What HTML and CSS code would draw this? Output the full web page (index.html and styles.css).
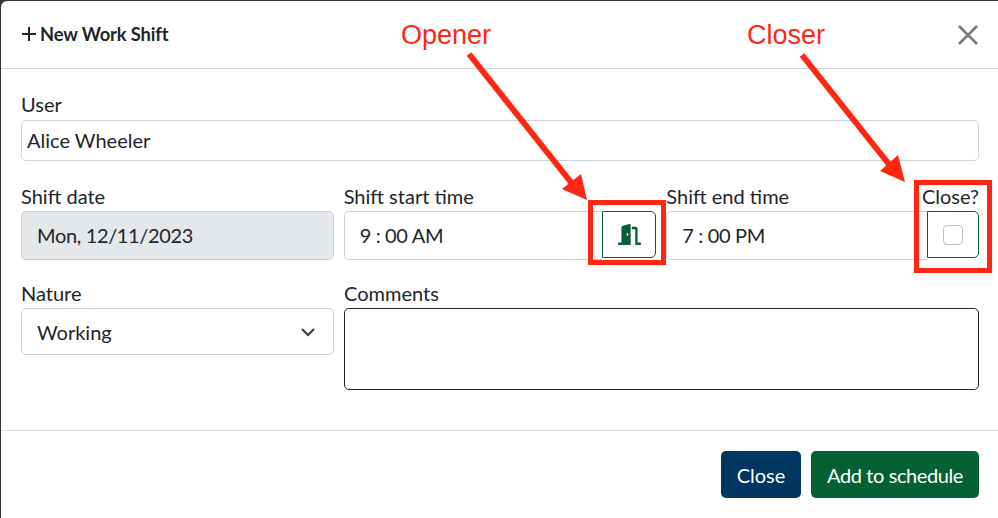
FILE: index.html
```html
<!DOCTYPE html>
<html lang="en">
<head>
  <meta charset="UTF-8" />
  <title>New Work Shift</title>
  <link rel="stylesheet" href="styles.css">
</head>
<body>

  <div class="modal">
    <header class="modal-header">
      <h5 class="modal-title">
        <svg class="plus" viewBox="0 0 14 14" width="14" height="14" aria-hidden="true">
          <path d="M7 0V14M0 7H14" />
        </svg>
        New Work Shift
      </h5>
      <svg class="close-x" viewBox="0 0 20 20" width="20" height="20" aria-hidden="true">
        <path d="M1 1 19 19M19 1 1 19" />
      </svg>
    </header>

    <div class="modal-body">
      <div class="row">
        <div class="col">
          <label>User</label>
          <div class="field field-user">Alice Wheeler</div>
        </div>
      </div>

      <div class="row row-times">
        <div class="col">
          <label>Shift date</label>
          <div class="field field-lg field-disabled">Mon, 12/11/2023</div>
        </div>
        <div class="col">
          <label>Shift start time</label>
          <div class="input-group">
            <div class="field field-lg">9 : 00 AM</div>
            <div class="addon">
              <svg viewBox="0 0 640 512" width="23" height="21" preserveAspectRatio="none" fill="#05603a" aria-hidden="true">
                <path d="M624 448h-80V113.45C544 86.19 522.47 64 496 64H384v64h96v384h144c8.84 0 16-7.16 16-16v-32c0-8.84-7.16-16-16-16zM312.24 1.01l-192 49.74C105.99 54.44 96 67.7 96 82.92V448H16c-8.84 0-16 7.16-16 16v32c0 8.84 7.16 16 16 16h336V33.18c0-21.58-19.56-37.41-39.76-32.17zM264 288c-13.25 0-24-14.33-24-32s10.75-32 24-32 24 14.33 24 32-10.75 32-24 32z" />
              </svg>
            </div>
          </div>
        </div>
        <div class="col">
          <div class="label-row">
            <label>Shift end time</label>
            <label>Close?</label>
          </div>
          <div class="input-group">
            <div class="field field-lg">7 : 00 PM</div>
            <div class="addon addon-check"><span class="check"></span></div>
          </div>
        </div>
      </div>

      <div class="row row-bottom">
        <div class="col">
          <label>Nature</label>
          <div class="field field-select">
            Working
            <svg viewBox="0 0 16 16" width="16" height="16" aria-hidden="true">
              <path d="m2 5 6 6 6-6" />
            </svg>
          </div>
        </div>
        <div class="col col-wide">
          <label>Comments</label>
          <div class="comments"></div>
        </div>
      </div>
    </div>

    <footer class="modal-footer">
      <button class="btn btn-navy">Close</button>
      <button class="btn btn-green">Add to schedule</button>
    </footer>
  </div>

  <!-- red annotations drawn on top of the screenshot -->
  <div class="note note-opener">Opener</div>
  <div class="note note-closer">Closer</div>
  <svg class="marks" width="998" height="518" viewBox="0 0 998 518" aria-hidden="true">
    <path class="mark-line" d="M469 54 574 186" />
    <path class="mark-head" d="M587 200 562 189 581 174Z" />
    <path class="mark-line" d="M802 55 892 168" />
    <path class="mark-head" d="M905 182 880 171 898 155Z" />
    <rect class="mark-box" x="590.5" y="202.5" width="73" height="60" />
    <rect class="mark-box" x="916.5" y="182.5" width="73" height="88" />
  </svg>

</body>
</html>
```

FILE: styles.css
```css
* {
  box-sizing: border-box;
}

body {
  margin: 0;
  width: 998px;
  height: 518px;
  overflow: hidden;
  position: relative;
  background: #333;
  font-family: Lato, 'Open Sans', sans-serif;
  color: #212529;
}

.modal {
  height: 517px;
  margin: 1px 0 0 1px;
  background: white;
  border-top-left-radius: 6px;
  display: flex;
  flex-direction: column;
}

.modal-header {
  height: 68px;
  flex: none;
  display: flex;
  align-items: center;
  justify-content: space-between;
  padding: 0 20px 0 21px;
  border-bottom: 1px solid #d3d8e0;
}

.modal-title {
  margin: 0 0 1px;
  display: flex;
  align-items: center;
  gap: 4px;
  font-size: 18.3px;
  font-weight: 700;
  letter-spacing: -0.1px;
}

.plus {
  stroke: #212529;
  stroke-width: 2;
}

.close-x {
  stroke: #7a7a7a;
  stroke-width: 2.6;
  fill: none;
}

.modal-body {
  flex: 1;
  padding: 24px 19px 0 20px;
}

.row {
  display: flex;
  gap: 10px;
}

.row-times {
  margin-top: 24px;
}

.row-bottom {
  margin-top: 22px;
}

.col {
  flex: 1;
  min-width: 0;
}

.row-bottom .col {
  flex: none;
  width: 313px;
}

.row-bottom .col-wide {
  width: 635px;
}

label {
  display: block;
  height: 24px;
  line-height: 22px;
  font-size: 20px;
  white-space: nowrap;
}

.label-row {
  display: flex;
  justify-content: space-between;
}

.field {
  background: white;
  border: 1px solid #c9cfdb;
  border-radius: 5px;
  display: flex;
  align-items: center;
}

.field-user {
  height: 41px;
  padding: 0 5px 2px;
  margin-top: 3px;
  font-size: 20px;
}

.field-lg {
  height: 49px;
  padding: 0 15px 2px;
  font-size: 20px;
  letter-spacing: -0.35px;
  flex: 1;
  margin-top: 2px;
}

.field-disabled {
  background: #e5e8eb;
}

.field-select {
  height: 47px;
  padding: 0 17px 0 15px;
  margin-top: 2px;
  font-size: 20px;
  justify-content: space-between;
}

.field-select svg {
  fill: none;
  stroke: #343a40;
  stroke-width: 2;
}

.input-group {
  display: flex;
}

.input-group .field {
  border-radius: 5px 0 0 5px;
  border-right: none;
}

.addon {
  flex: none;
  width: 54px;
  height: 47px;
  margin-top: 2px;
  border: 1px solid #05603a;
  border-radius: 0 5px 5px 0;
  display: flex;
  align-items: center;
  justify-content: center;
}

.addon-check {
  width: 52px;
}

.check {
  width: 20px;
  height: 20px;
  border: 1px solid #bfbfbf;
  border-radius: 4px;
}

.comments {
  height: 82px;
  margin-top: 2px;
  border: 1px solid #212529;
  border-radius: 5px;
}

.modal-footer {
  flex: none;
  height: 88px;
  display: flex;
  justify-content: flex-end;
  align-items: flex-start;
  gap: 10px;
  padding: 20px 19px 0 0;
  border-top: 1px solid #dedede;
}

.btn {
  height: 47px;
  border: none;
  border-radius: 5px;
  padding: 0 16px;
  font-family: inherit;
  font-size: 20px;
  color: white;
}

.btn-navy {
  background: #00365f;
  width: 80px;
  padding: 0;
}

.btn-green {
  background: #056034;
  letter-spacing: -0.4px;
}

.note {
  position: absolute;
  font-family: 'Liberation Sans', sans-serif;
  font-size: 27px;
  line-height: 32px;
  color: #ff2712;
}

.note-opener {
  left: 401px;
  top: 19px;
}

.note-closer {
  left: 747px;
  top: 19px;
}

.marks {
  position: absolute;
  left: 0;
  top: 0;
}

.mark-line {
  stroke: #ff2712;
  stroke-width: 6;
  fill: none;
}

.mark-head {
  fill: #ff2712;
}

.mark-box {
  stroke: #ff2712;
  stroke-width: 5;
  fill: none;
}
```
